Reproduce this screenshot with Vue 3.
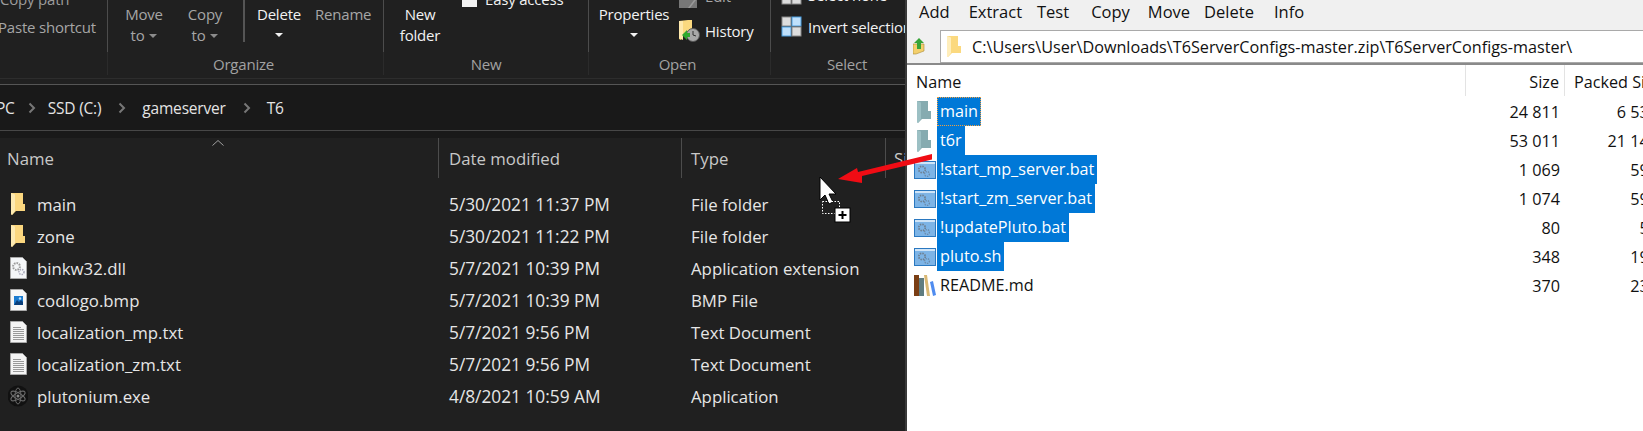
<template>
  <div class="desktop">
    <section class="explorer">
      <div class="ribbon">
        <div class="group group-clip">
          <div class="group-body clip-body">
            <span class="line-top">Copy path</span>
            <span class="line-paste">Paste shortcut</span>
          </div>
        </div>

        <div class="group group-organize">
          <div class="group-body">
            <button class="tool tool-move">Move<br />to<i class="caret dim"></i></button>
            <button class="tool tool-copy">Copy<br />to<i class="caret dim"></i></button>
            <span class="short-sep"></span>
            <button class="tool tool-delete on">Delete<br /><i class="caret solo"></i></button>
            <button class="tool tool-rename">Rename</button>
          </div>
          <div class="group-label">Organize</div>
        </div>

        <div class="group group-new">
          <div class="group-body">
            <button class="tool tool-folder on">New<br />folder</button>
            <div class="easy">
              <span class="easy-icon"></span>
              <span class="on">Easy access</span>
            </div>
          </div>
          <div class="group-label">New</div>
        </div>

        <div class="group group-open">
          <div class="group-body">
            <button class="tool tool-props on">Properties<br /><i class="caret solo"></i></button>
            <div class="open-side">
              <div class="edit-row">
                <svg class="edit-icon" viewBox="0 0 18 8">
                  <rect width="18" height="8" fill="#777" />
                  <path d="M9 8 15 0h2L11 8Z" fill="#999" />
                </svg>
                <span class="edit-text">Edit</span>
              </div>
              <div class="history-row">
                <svg class="history-icon" viewBox="0 0 21 22">
                  <path d="M0 1 9 0h4v16H4l-2 4-2-1Z" fill="#fbd97f" />
                  <path d="M0 1h4v19l-4-2Z" fill="#ffe9ad" />
                  <circle cx="14" cy="15" r="6.5" fill="#a8a8a8" stroke="#555" />
                  <path d="M14 11v4l3 1" fill="none" stroke="#333" />
                  <path d="M3 15 8 10v3h3v4H8v3Z" fill="#2fa82f" />
                </svg>
                <span class="on">History</span>
              </div>
            </div>
          </div>
          <div class="group-label">Open</div>
        </div>

        <div class="group group-select">
          <div class="group-body select-body">
            <div class="select-row row-none">
              <svg class="select-icon" viewBox="0 0 21 21">
                <rect x="1" y="1" width="9" height="9" fill="#ddd" stroke="#888" />
                <rect x="11" y="1" width="9" height="9" fill="#ddd" stroke="#888" />
                <rect x="1" y="11" width="9" height="9" fill="#ddd" stroke="#888" />
                <rect x="11" y="11" width="9" height="9" fill="#ddd" stroke="#888" />
              </svg>
              <span class="on">Select none</span>
            </div>
            <div class="select-row row-invert">
              <svg class="select-icon" viewBox="0 0 21 21">
                <rect x="1" y="1" width="9" height="9" fill="#ddd" stroke="#888" />
                <rect x="11" y="1" width="9" height="9" fill="#bfe0fb" stroke="#4a9ee0" />
                <rect x="1" y="11" width="9" height="9" fill="#bfe0fb" stroke="#4a9ee0" />
                <rect x="11" y="11" width="9" height="9" fill="#ddd" stroke="#888" />
              </svg>
              <span class="on">Invert selection</span>
            </div>
          </div>
          <div class="group-label">Select</div>
        </div>
      </div>

      <div class="ribbon-foot"></div>

      <nav class="crumbs">
        <span class="crumb crumb-pc">PC</span>
        <template v-for="(name, i) in crumbs" :key="name">
          <svg class="crumb-sep" :class="{ first: i === 0 }" viewBox="0 0 8 12"><path d="M1.5 1.5 6 6l-4.500 4.500" fill="none" stroke="#777" stroke-width="2" /></svg>
          <span class="crumb">{{ name }}</span>
        </template>
      </nav>

      <div class="list-top"></div>

      <div class="list">
        <header class="list-head">
          <div class="head-cell head-name">
            Name
            <svg class="sort" viewBox="0 0 12 6"><path d="M.5 5.5 6 .5l5.5 5" fill="none" stroke="#a0a0a0" /></svg>
          </div>
          <div class="head-cell head-date">Date modified</div>
          <div class="head-cell head-type">Type</div>
          <div class="head-cell head-size">Size</div>
        </header>
        <div v-for="file in files" :key="file.name" class="file-row">
          <div class="file-name">
            <svg class="file-icon" viewBox="0 0 20 22">
              <template v-if="file.icon === 'folder'">
                <path d="M3 0h12v11h2v7H8l-4 4-1-1Z" fill="#fbd77f" />
                <path d="M3 0l4 1.500V18l-3 4-1-1Z" fill="#fdeab2" />
              </template>
              <template v-else-if="file.icon === 'dll'">
                <path d="M2.500.500h12l4 4v17h-16Z" fill="#f4f6f8" stroke="#a9a9a9" />
                <circle cx="8.500" cy="9.500" r="3.400" fill="none" stroke="#999" stroke-width="2" stroke-dasharray="1.600 1" />
                <circle cx="13.500" cy="15" r="2.500" fill="none" stroke="#aab" stroke-width="1.600" stroke-dasharray="1.400 1" />
              </template>
              <template v-else-if="file.icon === 'bmp'">
                <path d="M2.500.500h12l4 4v17h-16Z" fill="#f8f8f8" stroke="#a9a9a9" />
                <rect x="6" y="7" width="9" height="9" fill="#1c7cd0" />
                <path d="M6 16l3-5 2 2 2-2 2 2v3Z" fill="#0b3f7a" />
                <circle cx="12" cy="9.500" r="1.200" fill="#bfe3ff" />
              </template>
              <template v-else-if="file.icon === 'txt'">
                <path d="M2.500.500h12l4 4v17h-16Z" fill="#f4f4f4" stroke="#a9a9a9" />
                <path d="M5 6.500h8M5 8.500h11M5 10.500h11M5 12.500h11M5 14.500h11M5 16.500h11M5 18.500h11" stroke="#999" fill="none" />
              </template>
              <template v-else>
                <circle cx="10" cy="11" r="10.500" fill="#111" />
                <g fill="none" stroke="#6b6b6b">
                  <ellipse cx="10" cy="11" rx="3" ry="8" />
                  <ellipse cx="10" cy="11" rx="3" ry="8" transform="rotate(60 10 11)" />
                  <ellipse cx="10" cy="11" rx="3" ry="8" transform="rotate(-60 10 11)" />
                </g>
                <circle cx="10" cy="11" r="1.500" fill="#888" />
              </template>
            </svg>
            <span>{{ file.name }}</span>
          </div>
          <div class="file-date">{{ file.date }}</div>
          <div class="file-type">{{ file.type }}</div>
        </div>
      </div>
    </section>

    <section class="archive">
      <div class="menu">
        <span v-for="item in menu" :key="item" class="menu-item" :class="'m-' + item.toLowerCase()">{{ item }}</span>
      </div>
      <div class="path-bar">
        <svg class="up-icon" viewBox="0 0 12 17">
          <path d="M0 6h11v7l-8 3H0Z" fill="#f3cf6c" stroke="#a98a35" stroke-width=".6" />
          <path d="M6 0l5 5H8v6H4V5H1Z" fill="#37a437" />
        </svg>
        <div class="path-box">
          <svg class="path-folder" viewBox="0 0 14 21">
            <path d="M0 0h11v10h3v7H5l-4 4-1-1Z" fill="#fbd97f" />
            <path d="M0 0l4 1.500V17l-3 4-1-1Z" fill="#ffeebb" />
          </svg>
          <span>C:\Users\User\Downloads\T6ServerConfigs-master.zip\T6ServerConfigs-master\</span>
        </div>
      </div>
      <div class="archive-line"></div>
      <header class="arc-head">
        <div class="arc-h-name">Name</div>
        <div class="arc-h-size">Size</div>
        <div class="arc-h-packed">Packed Size</div>
      </header>
      <div v-for="(entry, i) in entries" :key="entry.name" class="arc-row">
        <div class="arc-name">
          <svg class="arc-icon" viewBox="0 0 22 22">
            <template v-if="entry.icon === 'folder'">
              <path d="M3 0h11v10h3v8H8l-4 4-1-1Z" fill="#86abb0" />
              <path d="M3 0l4 1.500V18l-3 4-1-1Z" fill="#9cc0c4" />
            </template>
            <template v-else-if="entry.icon === 'bat'">
              <rect x=".5" y="2.500" width="21" height="17" fill="#7db4e6" stroke="#2a78c0" />
              <rect x="1" y="3" width="20" height="2" fill="#cfe4f7" />
              <circle cx="8" cy="10.500" r="3.200" fill="none" stroke="#6d7f90" stroke-width="1.800" stroke-dasharray="1.500 1" />
              <circle cx="13" cy="15" r="2.400" fill="none" stroke="#6d8cab" stroke-width="1.400" stroke-dasharray="1.300 .9" />
            </template>
            <template v-else>
              <rect x="0" y="0" width="5" height="21" fill="#7a3e14" />
              <rect x="5" y="3" width="5" height="18" fill="#5f7c80" />
              <path d="M10 0h3l3 21h-3Z" fill="#d9b874" />
              <path d="M16 7l3-1 3 14-3 1Z" fill="#4f8cf0" />
            </template>
          </svg>
          <span class="arc-label" :class="{ sel: entry.sel, focus: i === 0 }">{{ entry.name }}</span>
        </div>
        <div class="arc-size">{{ entry.size }}</div>
        <div class="arc-packed">{{ entry.packed }}</div>
      </div>
    </section>

    <svg class="arrow" viewBox="0 0 100 40">
      <path d="M94 4v5.500L24 26v7L0 29l19-11 1 4Z" fill="#f00c14" />
    </svg>

    <svg class="cursor" viewBox="0 0 34 50">
      <path d="M1 1v23l5-5 4 9 4-2-4-8h7Z" fill="#fff" stroke="#000" />
      <rect x="3.500" y="25.500" width="17" height="12" fill="none" stroke="#fff" stroke-dasharray="1.500 1.500" />
      <rect x="16" y="32" width="15" height="14" fill="#fff" stroke="#000" />
      <path d="M19.500 39h8M23.500 35v8" stroke="#000" stroke-width="2" />
    </svg>
  </div>
</template>

<script setup>
const crumbs = ['SSD (C:)', 'gameserver', 'T6']

const files = [
  { name: 'main', date: '5/30/2021 11:37 PM', type: 'File folder', icon: 'folder' },
  { name: 'zone', date: '5/30/2021 11:22 PM', type: 'File folder', icon: 'folder' },
  { name: 'binkw32.dll', date: '5/7/2021 10:39 PM', type: 'Application extension', icon: 'dll' },
  { name: 'codlogo.bmp', date: '5/7/2021 10:39 PM', type: 'BMP File', icon: 'bmp' },
  { name: 'localization_mp.txt', date: '5/7/2021 9:56 PM', type: 'Text Document', icon: 'txt' },
  { name: 'localization_zm.txt', date: '5/7/2021 9:56 PM', type: 'Text Document', icon: 'txt' },
  { name: 'plutonium.exe', date: '4/8/2021 10:59 AM', type: 'Application', icon: 'atom' },
]

const menu = ['Add', 'Extract', 'Test', 'Copy', 'Move', 'Delete', 'Info']

const entries = [
  { name: 'main', size: '24 811', packed: '6 538', icon: 'folder', sel: true },
  { name: 't6r', size: '53 011', packed: '21 147', icon: 'folder', sel: true },
  { name: '!start_mp_server.bat', size: '1 069', packed: '593', icon: 'bat', sel: true },
  { name: '!start_zm_server.bat', size: '1 074', packed: '595', icon: 'bat', sel: true },
  { name: '!updatePluto.bat', size: '80', packed: '58', icon: 'bat', sel: true },
  { name: 'pluto.sh', size: '348', packed: '196', icon: 'bat', sel: true },
  { name: 'README.md', size: '370', packed: '234', icon: 'book', sel: false },
]
</script>

<style>
html,
body {
  margin: 0;
  background: #202020;
}
</style>

<style scoped>
.desktop {
  position: relative;
  display: flex;
  width: 1643px;
  height: 431px;
  overflow: hidden;
  font-family: 'Open Sans', 'Noto Sans', sans-serif;
  font-size: 15px;
  letter-spacing: -0.2px;
}

.explorer {
  width: 905px;
  flex: none;
  border-right: 2px solid #3a3a3a;
  background: #202020;
  color: #e6e6e6;
  overflow: hidden;
}

.ribbon {
  display: flex;
  height: 78px;
  background: #202020;
  color: #a6a6a6;
  border-bottom: 1px solid #2d2d2d;
  overflow: hidden;
}

.group {
  position: relative;
  display: flex;
  flex-direction: column;
  flex: none;
  box-sizing: border-box;
  height: 75px;
  border-right: 1px solid #2b2b2b;
}

.group::after {
  content: '';
  position: absolute;
  top: 0;
  right: -1px;
  width: 1px;
  height: 52px;
  background: #4c4c4c;
}

.group-clip { width: 108px; }
.group-organize { width: 276px; }
.group-new { width: 205px; }
.group-open { width: 182px; }
.group-select { width: 134px; border-right: 0; }
.group-select::after { display: none; }

.group-body {
  display: flex;
  align-items: flex-start;
  height: 53px;
}

.group-label {
  text-align: center;
  line-height: 22px;
  color: #a2a2a2;
}

.group-organize .group-label { padding-right: 4px; }
.group-open .group-label { padding-right: 4px; }
.group-select .group-label { padding-left: 18px; }

.clip-body {
  position: relative;
  display: block;
}

.line-top,
.line-paste {
  position: absolute;
  left: -2px;
  white-space: nowrap;
}

.line-top { top: -11px; left: 0; color: #9c9c9c; }
.line-paste { top: 17px; }

.tool {
  flex: none;
  padding: 4px 0 0;
  border: 0;
  background: none;
  color: inherit;
  font: inherit;
  letter-spacing: inherit;
  line-height: 21px;
  text-align: center;
  white-space: nowrap;
}

.on { color: #f2f2f2; }

.tool-move { width: 72px; }
.tool-copy { width: 50px; }
.tool-delete { width: 68px; }
.tool-rename { width: 56px; margin-left: 2px; }
.tool-folder { width: 72px; }
.tool-props { width: 90px; }

.short-sep {
  flex: none;
  width: 2px;
  height: 42px;
  margin-left: 13px;
  background: #555;
}

.caret {
  display: inline-block;
  width: 0;
  height: 0;
  margin-left: 5px;
  margin-bottom: 3px;
  border-top: 4px solid #f2f2f2;
  border-left: 4px solid transparent;
  border-right: 4px solid transparent;
}

.caret.dim { border-top-color: #8c8c8c; }
.caret.solo { margin-left: 0; margin-bottom: 4px; }

.easy {
  display: flex;
  align-items: center;
  gap: 8px;
  margin: -11px 0 0 6px;
  white-space: nowrap;
}

.easy-icon {
  width: 15px;
  height: 16px;
  background: #f2f2f2;
}

.open-side {
  display: flex;
  flex-direction: column;
}

.edit-row {
  display: flex;
  gap: 8px;
  height: 7px;
}

.edit-icon {
  width: 18px;
  height: 8px;
  flex: none;
}

.edit-text {
  margin-top: -14px;
  line-height: 20px;
  color: #a6a6a6;
}

.history-row {
  display: flex;
  align-items: center;
  gap: 5px;
  margin-top: 13px;
  white-space: nowrap;
}

.history-icon {
  width: 21px;
  height: 22px;
  flex: none;
}

.select-body {
  display: block;
}

.select-row {
  display: flex;
  align-items: center;
  gap: 6px;
  padding-left: 10px;
  white-space: nowrap;
}

.row-none { margin-top: -16px; height: 21px; }
.row-invert { margin-top: 11px; height: 21px; }

.select-icon {
  width: 21px;
  height: 21px;
  flex: none;
}

.ribbon-foot {
  height: 5px;
  background: #202020;
  border-bottom: 1px solid #555;
}

.crumbs {
  display: flex;
  align-items: center;
  height: 45px;
  background: #191919;
  color: #e4e4e4;
  font-size: 15.5px;
  white-space: nowrap;
}

.crumb-pc { margin-left: -4px; }

.crumb-sep {
  width: 8px;
  height: 12px;
  margin: 0 16px 0 17px;
  flex: none;
}

.crumb-sep.first {
  margin: 0 12px 0 13px;
}

.list-top {
  height: 7px;
  border-top: 1px solid #474747;
  background: #191919;
}

.list {
  padding-bottom: 17px;
  letter-spacing: 0;
  font-size: 16.8px;
}

.list-head {
  display: flex;
  height: 40px;
  margin-bottom: 10px;
  color: #c8c8c8;
  line-height: 42px;
  white-space: nowrap;
}

.head-cell {
  position: relative;
  flex: none;
  box-sizing: border-box;
  border-right: 1px solid #4c4c4c;
}

.head-name { width: 439px; padding-left: 7px; }
.head-date { width: 243px; padding-left: 10px; }
.head-type { width: 204px; padding-left: 9px; }
.head-size { width: 40px; padding-left: 8px; border: 0; }

.sort {
  position: absolute;
  top: 2px;
  left: 212px;
  width: 12px;
  height: 6px;
}

.file-row {
  display: flex;
  height: 32px;
  align-items: center;
  white-space: nowrap;
}

.file-name {
  display: flex;
  align-items: center;
  width: 449px;
  flex: none;
  box-sizing: border-box;
  padding-left: 8px;
}

.file-icon {
  width: 20px;
  height: 22px;
  margin-right: 9px;
  flex: none;
}

.file-date {
  width: 242px;
  flex: none;
  font-size: 17.3px;
}

.archive {
  flex: 1;
  min-width: 0;
  background: #fff;
  color: #111;
  font-size: 16.2px;
  letter-spacing: 0;
  overflow: hidden;
  white-space: nowrap;
}

.menu {
  display: flex;
  align-items: flex-start;
  height: 30px;
  padding-left: 12px;
  background: #f0f0f0;
  line-height: 24px;
  font-size: 16.5px;
}

.m-add { margin-right: 19px; }
.m-extract { margin-right: 15px; }
.m-test { margin-right: 22px; }
.m-copy { margin-right: 18px; }
.m-move { margin-right: 14px; }
.m-delete { margin-right: 20px; }

.path-bar {
  display: flex;
  align-items: center;
  height: 33px;
  background: #f0f0f0;
}

.up-icon {
  width: 12px;
  height: 17px;
  margin: 0 15px 0 6px;
  flex: none;
}

.path-box {
  display: flex;
  align-items: center;
  flex: 1;
  height: 33px;
  box-sizing: border-box;
  border: 1px solid #a9a9a9;
  border-right: 0;
  background: #fff;
  padding-left: 6px;
  gap: 11px;
}

.path-folder {
  width: 14px;
  height: 21px;
  flex: none;
}

.archive-line {
  height: 2px;
  background: #8a8a8a;
}

.arc-head {
  display: flex;
  height: 32px;
  align-items: flex-start;
}

.arc-head > div {
  flex: none;
  box-sizing: border-box;
  height: 31px;
  line-height: 35px;
}

.arc-h-name {
  width: 559px;
  padding-left: 9px;
  border-right: 1px solid #e3e3e3;
}

.arc-h-size {
  width: 99px;
  padding-right: 5px;
  text-align: right;
  border-right: 1px solid #e3e3e3;
}

.arc-h-packed {
  width: 110px;
  padding-left: 9px;
}

.arc-row {
  display: flex;
  height: 29px;
  align-items: center;
}

.arc-name {
  display: flex;
  align-items: center;
  width: 559px;
  flex: none;
  padding-left: 7px;
  box-sizing: border-box;
  height: 29px;
}

.arc-icon {
  width: 22px;
  height: 22px;
  margin-right: 1px;
  flex: none;
}

.arc-label {
  display: block;
  box-sizing: border-box;
  height: 29px;
  line-height: 29px;
  padding: 0 3px;
}

.arc-label.sel {
  background: #0078d7;
  color: #fff;
}

.arc-label.focus {
  outline: 1px dotted #f0a040;
  outline-offset: -1px;
}

.arc-size {
  width: 94px;
  flex: none;
  text-align: right;
}

.arc-packed {
  width: 98px;
  flex: none;
  text-align: right;
}

.arrow {
  position: absolute;
  left: 838px;
  top: 150px;
  width: 100px;
  height: 40px;
}

.cursor {
  position: absolute;
  left: 819px;
  top: 176px;
  width: 34px;
  height: 50px;
}
</style>
